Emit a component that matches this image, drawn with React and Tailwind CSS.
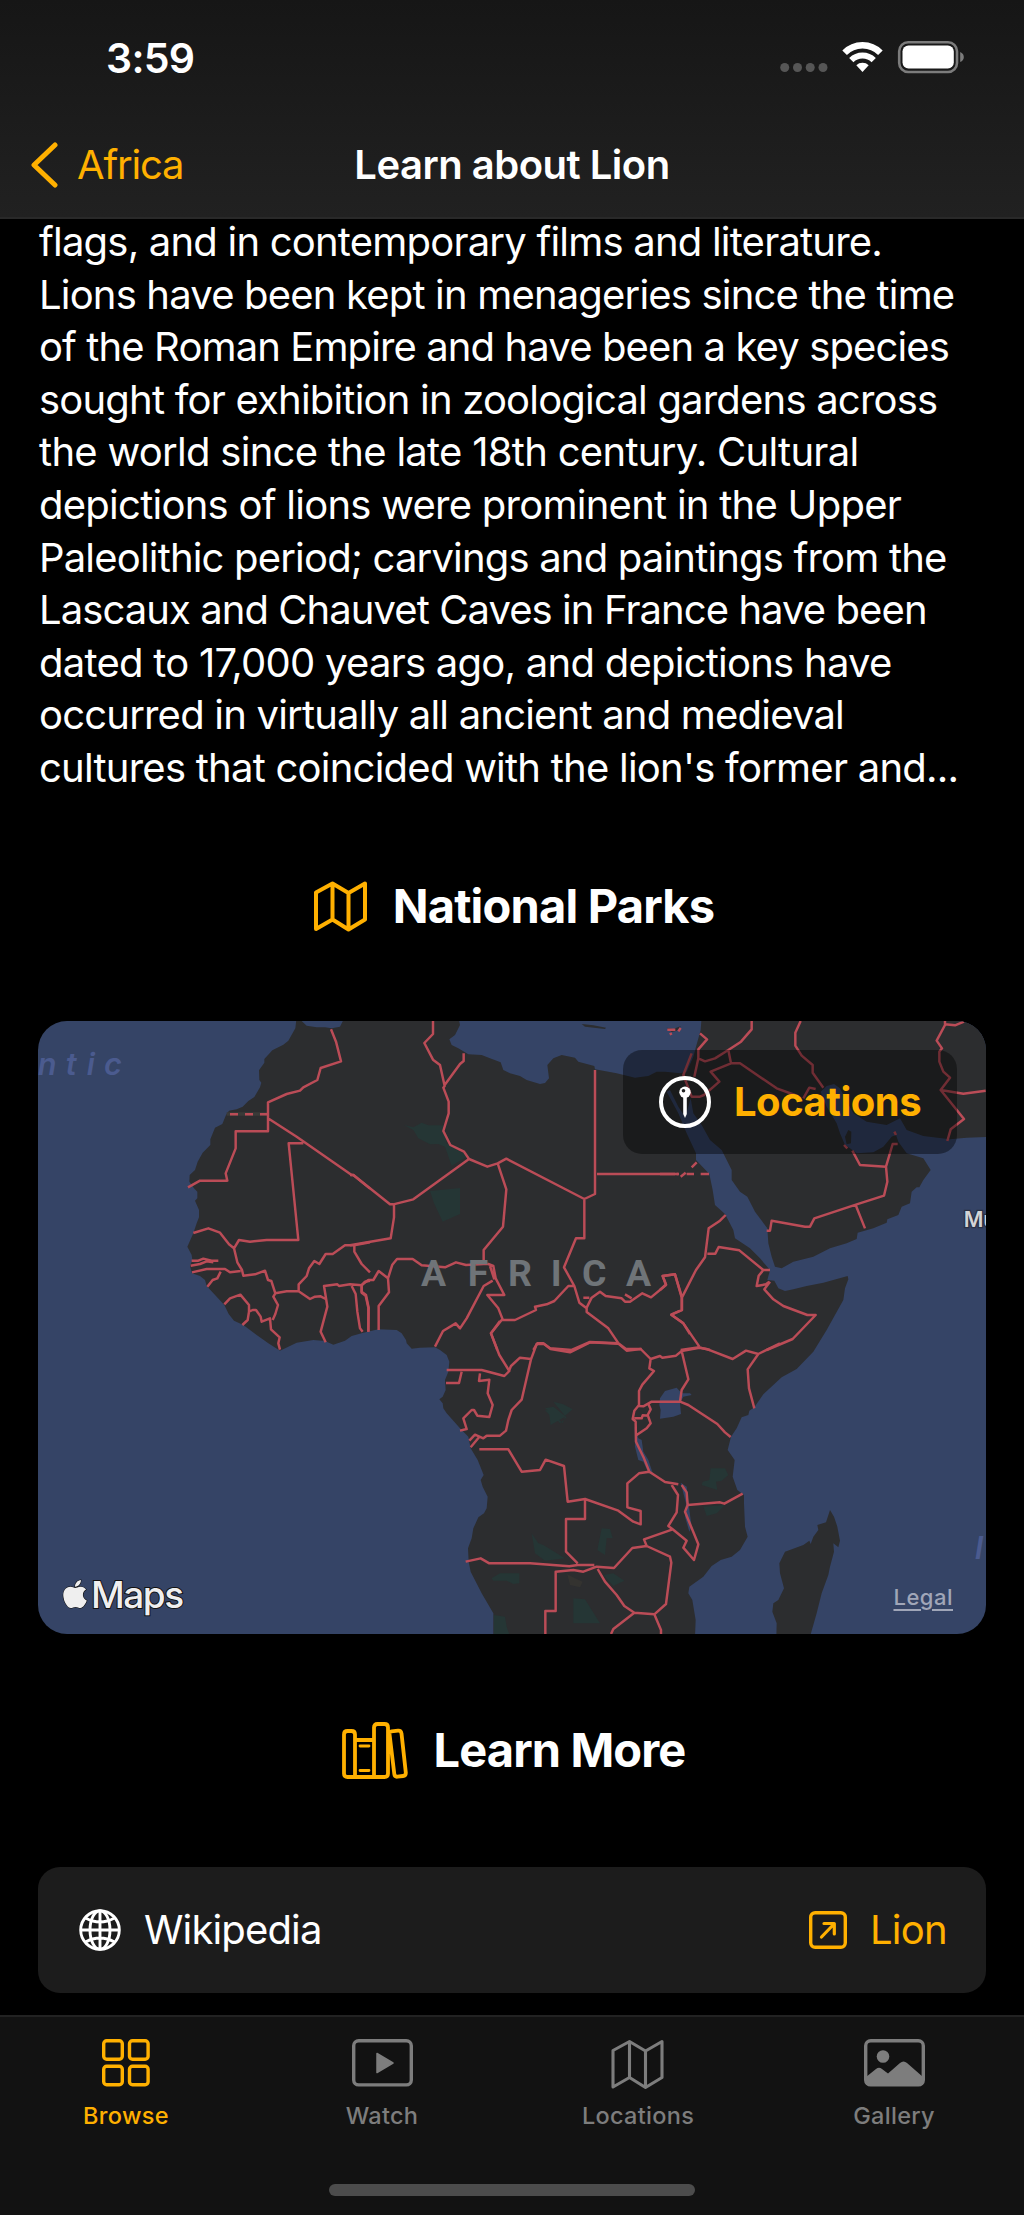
import React from "react";
import { FaApple } from "react-icons/fa";

const FONT = "font-['Inter','Liberation_Sans',sans-serif]";

const LINES = [
  ["flags, and in contemporary films and literature.", "tracking-[-0.79px]"],
  ["Lions have been kept in menageries since the time", "tracking-[-0.82px]"],
  ["of the Roman Empire and have been a key species", "tracking-[-0.89px]"],
  ["sought for exhibition in zoological gardens across", "tracking-[-0.8px]"],
  ["the world since the late 18th century. Cultural", "tracking-[-0.71px]"],
  ["depictions of lions were prominent in the Upper", "tracking-[-0.74px]"],
  ["Paleolithic period; carvings and paintings from the", "tracking-[-0.82px]"],
  ["Lascaux and Chauvet Caves in France have been", "tracking-[-0.93px]"],
  ["dated to 17,000 years ago, and depictions have", "tracking-[-0.75px]"],
  ["occurred in virtually all ancient and medieval", "tracking-[-0.8px]"],
  ["cultures that coincided with the lion's former and...", "tracking-[-0.76px]"],
];

const MAINLAND =
  "M800,20 796,55 775,92 760,104 727,121 703,147 703,158 687,181 688,210 694,218 690,232 673,261 655,273 638,290 620,298 597,302 588,315 577,342 555,353 541,388 541,405 518,428 503,455 495,480 479,495 478,515 492,535 502,545 502,565 495,572 507,600 507,622 500,640 490,670 472,710 485,735 487,750 480,768 486,790 510,798 525,810 530,828 560,860 583,885 596,912 612,932 640,945 680,975 715,1000 750,1022 800,998 850,990 885,993 910,1004 945,992 965,978 1000,968 1045,958 1100,960 1115,970 1128,990 1130,1000 1145,1016 1170,1013 1215,1012 1230,1020 1250,1035 1258,1055 1255,1085 1245,1110 1247,1140 1238,1160 1228,1168 1238,1180 1240,1195 1250,1210 1290,1255 1315,1280 1322,1315 1343,1350 1361,1395 1352,1410 1358,1430 1373,1460 1370,1495 1362,1510 1345,1522 1330,1555 1325,1585 1314,1615 1316,1655 1322,1685 1355,1750 1390,1810 1390,1880 1995,1880 1997,1830 1987,1770 1975,1750 1978,1730 2020,1700 2045,1668 2072,1650 2105,1640 2130,1620 2153,1580 2145,1550 2142,1480 2142,1455 2122,1440 2108,1400 2114,1350 2093,1320 2103,1280 2120,1255 2135,1222 2155,1215 2158,1202 2173,1192 2200,1153 2255,1102 2300,1077 2350,1025 2390,960 2440,870 2445,835 2455,808 2453,798 2380,818 2330,828 2290,838 2265,843 2245,835 2233,812 2212,810 2220,780 2190,745 2160,715 2115,685 2110,660 2085,612 2055,585 2048,540 2038,492 1998,450 1998,430 1970,370 1945,310 1910,245 1920,240 1945,290 1966,322 1982,265 1990,310 2015,345 2040,390 2075,420 2105,480 2105,510 2130,545 2152,560 2175,605 2212,655 2215,700 2225,740 2235,770 2255,775 2290,755 2350,740 2400,715 2450,700 2480,687 2483,668 2530,655 2570,638 2572,628 2605,615 2615,590 2640,580 2645,545 2660,532 2668,532 2680,510 2702,480 2680,445 2630,430 2605,395 2598,375 2585,380 2560,410 2530,427 2480,430 2460,415 2445,405 2430,370 2420,340 2390,290 2372,245 2390,228 2412,222 2430,235 2445,265 2470,310 2510,335 2570,345 2610,325 2630,360 2680,378 2760,388 2810,383 2880,381 2880,20 2015,20 2012,60 1998,110 1990,140 1970,185 1950,190 1905,185 1880,185 1855,198 1815,203 1760,190 1695,178 1693,168 1645,155 1635,143 1595,135 1570,145 1552,165 1557,205 1545,219 1530,222 1490,210 1470,198 1440,190 1420,180 1412,157 1380,145 1355,135 1315,133 1285,115 1265,105 1258,88 1275,75 1290,45 1285,20 945,20 930,50 905,55 885,52 860,52 830,47 815,33Z";

const MADAGASCAR =
  "M2400,1500 2412,1520 2422,1550 2430,1592 2425,1612 2410,1600 2412,1625 2400,1670 2395,1695 2375,1750 2360,1810 2340,1880 2239,1880 2240,1840 2227,1805 2230,1780 2245,1770 2262,1735 2250,1690 2248,1660 2265,1625 2320,1605 2338,1592 2342,1602 2350,1580 2365,1560 2362,1545 2388,1537Z";

// Country borders, one entry per map quadrant with its own origin.
const BORDERS = [
  {
    at: "translate(0 0)",
    d: "M903,58 918,95 933,154 872,174 862,210 820,232 810,242 770,252 714,277V364H617V415L587,490 592,512H510L474,532M714,325 800,380 965,495H970L1020,536M820,400H776L805,690H710L660,695 627,690 612,715 597,703 570,668 535,655 490,669M612,715 622,757 636,780 640,797 675,793 705,782 714,810 724,813 736,850 730,860 744,885 736,912 728,930M486,787 530,777H585L600,787 632,783M485,752 505,752 520,746 545,752 565,752M482,767 510,762 530,754 550,757M532,830 548,810 562,805 572,785M583,883 600,865 631,854 657,885V905L668,900 678,900 692,920 695,935 720,925 723,958 749,982 745,1000 750,1019M657,905 653,930 637,945M736,850 770,844H806L840,867 855,860 872,859 887,867M806,844V823L830,798 837,775 853,753 868,762 887,732H908L945,706H972L1020,697M973,706V725L995,762 1020,787M887,997 872,965 892,890 887,858 882,828 922,823 927,828 960,823 995,826 1005,815 1020,812M965,828 977,852 982,905 990,955 998,965M995,826V848L1007,857 1015,893V965",
  },
  {
    at: "translate(960 0)",
    d: "M249,33V72L223,99 249,149 270,165 284,228 280,233 296,275V310L280,363 301,405 342,425 357,447 412,470 443,460 469,446 703,567 735,552V180M341,130V153L330,162 284,225M357,447 190,568 130,583H120L10,495H0M132,585V622L122,685 0,706M443,460 469,538 459,650 401,720V762H415L430,768 437,805 463,855H412L445,895 458,928M401,762 348,765 318,757 285,772 215,766 188,747H141L127,764 114,805 117,847 86,888V960M114,805 86,783 70,810H55L35,825V845L48,855 56,893 55,965M428,812 401,828 350,925 330,955 317,940 279,963 255,1010M741,492H985M703,567V685H678L642,772 673,828 688,878 710,895V906L775,955 804,998M673,828H655L613,873 590,883 555,890 558,900 495,930H455L423,970 442,1020M710,893 725,863 750,845 767,858 815,865 825,875H840L877,850 903,862 948,825 938,798 975,793 995,862V900L964,914 1000,940 1020,972M700,863H718M420,768 433,808M550,1020 562,1000H580L600,1015 665,1020 720,996 805,1000 828,1017H875M825,853 845,865",
  },
  {
    at: "translate(1890 0)",
    d: "M0,492H45M50,492H57M62,500 77,488M95,472 110,457M80,492H102M122,492H147M275,33V58L243,95 205,120 165,145 135,154 115,145V118L141,88 120,70M205,120 213,160 152,185 178,215 132,255 120,260H95L70,195 95,130M115,145 103,200M213,160H240L350,235 405,255M422,33 406,68V107L425,137 458,165V188L490,233M430,265 448,233 467,237M320,662H330L335,632 435,650H450L463,625 590,583 672,557 682,515 678,470 600,465 577,422M678,470 698,402H713M587,585 615,655M855,33 855,45 830,92 846,115 838,125V155L850,185 870,203 842,240 912,327 872,358 862,393M855,43 885,46 912,35M842,240 910,251 977,242M703,365 708,375M552,405 562,415M197,615 180,632 146,655 135,742 108,780 66,862M142,731H166L176,711 238,721 310,780H330M310,780 296,797 290,828 318,823 328,815M330,815 313,838 340,868 370,888 442,915H467L398,987 320,1020M66,862 45,793 8,798 18,823 0,840M66,862V900L34,914 70,940 118,1010M62,1020 118,1012 150,1020",
  },
  {
    at: "translate(1200 870)",
    d: "M50,210H155L223,228 238,213 208,165 183,100 210,63M95,215 87,249H48M150,220 147,243 178,239 173,280 188,315 178,351 142,347 132,330H125L100,355 110,387 90,392M118,422 135,404 160,415 170,407H210L228,392 235,360 245,330 275,299 303,178 320,132H342L362,147 420,157 480,127 565,131 590,152 632,147 662,177 690,168 697,173 738,167 755,153 808,143M238,210 243,198 270,173 303,177M122,442 147,412M148,448H235L275,515 330,510 347,479 402,498 413,605 465,597V657H408V755L443,790M465,597 565,632 610,665 632,673V633L592,622V550L627,520 658,515 705,546 745,553M662,177 658,205 672,213 637,254 627,273V315L613,332 608,357 617,365 618,425 642,475 658,515M627,318 640,319 665,305H750L755,270 775,238 755,153M750,305 775,315 862,372 885,397 902,411M655,312 662,328 653,345 662,370 650,385 620,405M613,355H635L638,346 655,347M808,143 833,148 908,177 948,152 985,162 1050,130M985,162 953,208 957,265 973,325M755,555 770,577 773,615 765,635 805,733 792,780 760,743 770,722 728,688 642,718 650,738 720,770 724,788 708,912 673,943 613,938 550,987 543,1002M773,615 870,607 883,611 938,581M725,555 744,585 740,637 715,678 728,688M107,785 152,775 178,790H300L418,799 443,795H493M650,738 607,744 552,804 500,800 460,815 430,810 377,815V933H346V1002M503,807 525,845 560,885 583,918 613,938M673,943 693,990V1002",
  },
];

const PARKS =
  "M1122,345 1150,352 1175,338 1195,346H1240L1250,400 1290,425 1318,435 1265,468 1245,410 1225,402 1200,403 1165,385 1150,360ZM1200,543 1290,534V612L1238,635 1212,580ZM1545,1195 1570,1190 1610,1222 1590,1240 1565,1210 1552,1200ZM1545,1200 1560,1202 1598,1240 1605,1220 1562,1245 1558,1215ZM1570,1175 1600,1183 1628,1198 1605,1217ZM1715,1555 1740,1557 1748,1584H1730L1725,1635 1702,1620ZM1505,1570 1525,1600 1540,1605 1605,1645 1545,1652 1515,1630ZM1385,1705 1410,1690H1468V1720L1450,1722 1430,1712 1390,1712ZM1720,1695 1750,1690 1783,1712 1750,1728ZM1630,1765 1665,1768 1710,1840H1630ZM1392,1815 1425,1820 1430,1850 1440,1880H1392ZM2042,1375H2085L2095,1395 2075,1412 2058,1415 2062,1440 2015,1425 2018,1415 2038,1410ZM2020,1490 2085,1485 2060,1510 2030,1518Z";

const LAKES =
  "M1890,1165 1905,1143 1940,1133 1955,1150H1980L1985,1155 1960,1160 1950,1180 1953,1212 1930,1220 1890,1226 1892,1200 1888,1185ZM1814,1250 1825,1285 1835,1290 1840,1325 1855,1350 1870,1395 1855,1388 1840,1355 1825,1350 1815,1310ZM1952,1418 1970,1430 1978,1500 1985,1550 1978,1565 1965,1520 1968,1480Z";

function AfricaMap() {
  return (
    <svg viewBox="24 33 2844 1839" preserveAspectRatio="none" className="block h-full w-full">
      <rect x="0" y="0" width="2900" height="1900" fill="#354466" />
      <g fill="#2c2d2f">
        <path d={MAINLAND} />
        <path d={MADAGASCAR} />
        <path d="M2445,380 2455,360 2464,365 2463,400 2450,403Z" />
        <path d="M1655,42 1690,46 1728,53 1725,57 1665,50Z" />
        <path d="M1910,53 1930,57 1953,48 1940,62 1925,66Z" />
      </g>
      <path d={PARKS} fill="#253635" />
      <path d="M1612,1693 1635,1705 1658,1715 1650,1732 1620,1725Z" fill="#343330" />
      <path d={LAKES} fill="#354466" />
      <path d="M590,312H714" stroke="#3a3a38" strokeWidth="11" />
      <g fill="none" stroke="#bb4c57" strokeWidth="7.4" strokeLinejoin="round">
        {BORDERS.map((b) => (
          <path key={b.at} transform={b.at} d={b.d} />
        ))}
        <path d="M600,313H624M645,313H669M690,313H714" />
        <path d="M1912,59H1936M1945,64 1952,54M1921,68 1924,75" />
      </g>
      <g fontFamily="Inter, sans-serif">
        <g fontSize="92" fontStyle="italic" fontWeight="600" fill="#4b5b8f">
          <text y="194" x="23 107 170 222">ntic</text>
          <text y="1648" x="2834">I</text>
        </g>
        <text y="828" x="1211 1344 1470 1579 1693 1826" textAnchor="middle" fontSize="112" fontWeight="700" fill="#6f7478" className="font-['Roboto']">
          AFRICA
        </text>
        <text x="2801" y="650" fontSize="64" fontWeight="600" fill="#d3d4d6" stroke="#2a3145" strokeWidth="8" paintOrder="stroke">
          Mu
        </text>
      </g>
    </svg>
  );
}

function MapIcon({ className, w = 3.6 }) {
  return (
    <svg viewBox="0 0 53 51" className={className} fill="none" stroke="currentColor" strokeWidth={w} strokeLinejoin="round">
      <path d="M2,11.5V48L18.5,38.5 34.5,48.5 51,38.5V2.5L34.5,12 18.5,2.5ZM18.5,2.5V38.5M34.5,12V48.5" />
    </svg>
  );
}

function BooksIcon() {
  return (
    <svg viewBox="0 0 66 58" className="h-[58px] w-[66px]" fill="none" stroke="#ffb000" strokeWidth="3.8" strokeLinejoin="round" strokeLinecap="round">
      <path d="M2,12.5Q2,9 5.5,9H9.5Q13,9 13,12.5V55H5.5Q2,55 2,51.5ZM13,18H32M13,55H32M32,55V5.5Q32,2 35.5,2H42.5Q46,2 46,5.5V51.5Q46,55 42.5,55H32M49.5,9.3 56,8.7Q59,8.5 59.5,11.5L63.800,50.5Q64,53.700 61,54L55.5,54.700Q52.700,55 52.300,52L47.5,12Q47.300,9.5 49.5,9.3Z" />
      <path d="M18,24H27M18,48.5H27" strokeWidth="2.8" />
    </svg>
  );
}

function GlobeIcon() {
  return (
    <svg viewBox="0 0 42 42" className="h-[42px] w-[42px]" fill="none" stroke="#fff" strokeWidth="2.9">
      <circle cx="21" cy="21" r="19.3" />
      <ellipse cx="21" cy="21" rx="10" ry="19.3" />
      <path d="M21,1.5V40.5M1.5,21H40.5M6.5,9Q21,17 35.5,9M6.5,33Q21,25 35.5,33" />
    </svg>
  );
}

function ArrowSquare() {
  return (
    <svg viewBox="0 0 38 38" className="h-[38px] w-[38px]" fill="none" stroke="#ffb000" strokeWidth="3.400" strokeLinecap="round" strokeLinejoin="round">
      <rect x="1.700" y="1.700" width="34.600" height="34.600" rx="4.5" />
      <path d="M12.5,26 25,13M15,12.5H25.300V23" strokeWidth="3.2" />
    </svg>
  );
}

function StatusIcons() {
  return (
    <svg viewBox="770 30 210 60" className="h-[60px] w-[210px]">
      <g fill="#565656">
        <circle cx="784.700" cy="68.500" r="4.500" />
        <circle cx="797.500" cy="68.500" r="4.500" />
        <circle cx="810.200" cy="68.500" r="4.500" />
        <circle cx="823" cy="68.500" r="4.500" />
      </g>
      <g fill="none" stroke="#fff">
        <path d="M844.600,53.800A25,25 0 0 1 880.400,53.800" strokeWidth="6.400" />
        <path d="M851.300,61.200A15.800,15.800 0 0 1 873.700,61.200" strokeWidth="6" />
      </g>
      <path d="M862.500,73 856.300,66.200A9,9 0 0 1 868.700,66.200Z" fill="#fff" />
      <rect x="899.200" y="43.200" width="57.800" height="29.800" rx="9" fill="none" stroke="#7c7c7c" strokeWidth="2.600" />
      <rect x="902.500" y="46.500" width="51.300" height="23" rx="6" fill="#fff" />
      <path d="M960.200,53Q963.800,54.500 963.800,58T960.200,63Z" fill="#7c7c7c" />
    </svg>
  );
}

function PinIcon() {
  return (
    <svg viewBox="0 0 52 52" className="h-[52px] w-[52px]">
      <circle cx="26" cy="26" r="24" fill="none" stroke="#fff" strokeWidth="4" />
      <circle cx="26" cy="16.300" r="5.700" fill="#fff" />
      <circle cx="24.500" cy="14.800" r="1.800" fill="#222" />
      <path d="M24.200,20H27.800V38L26,42 24.200,38Z" fill="#fff" />
    </svg>
  );
}

const TABS = [
  {
    label: "Browse",
    spacing: "tracking-[0.35px]",
    color: "text-[#ffb000]",
    icon: (
      <svg viewBox="0 0 48 48" className="h-[48px] w-[48px]" fill="none" stroke="currentColor" strokeWidth="3.400">
        <rect x="1.700" y="1.700" width="18.600" height="18.600" rx="3" />
        <rect x="27.500" y="1.700" width="18.600" height="18.600" rx="3" />
        <rect x="1.700" y="27.200" width="18.600" height="18.600" rx="3" />
        <rect x="27.500" y="27.200" width="18.600" height="18.600" rx="3" />
      </svg>
    ),
  },
  {
    label: "Watch",
    spacing: "tracking-[0.3px]",
    color: "text-[#7d7d7d]",
    icon: (
      <svg viewBox="0 0 61 48" className="h-[48px] w-[61px]" fill="none" stroke="currentColor" strokeWidth="3.400">
        <rect x="1.700" y="1.700" width="57.600" height="44.200" rx="5" />
        <path d="M25,14.500 41,24 25,33.500Z" fill="currentColor" strokeWidth="1.500" strokeLinejoin="round" />
      </svg>
    ),
  },
  {
    label: "Locations",
    spacing: "tracking-[0.3px]",
    color: "text-[#7d7d7d]",
    icon: <MapIcon className="mr-[2px] h-[51px] w-[53px]" w={3.1} />,
  },
  {
    label: "Gallery",
    spacing: "tracking-[0.3px]",
    color: "text-[#7d7d7d]",
    icon: (
      <svg viewBox="0 0 61 48" className="h-[48px] w-[61px]" fill="none" stroke="currentColor" strokeWidth="3.400">
        <rect x="1.700" y="1.700" width="57.600" height="44.200" rx="5" />
        <circle cx="19" cy="17.500" r="6.300" fill="currentColor" stroke="none" />
        <path d="M2,38 12,30Q15,27.500 18,30L24,34.500 36,24Q39.500,21 43,24L59,38V42Q59,46 55,46H6Q2,46 2,42Z" fill="currentColor" stroke="none" />
      </svg>
    ),
  },
];

export default function App() {
  return (
    <div className={`flex h-[2215px] w-[1024px] flex-col overflow-hidden bg-black text-white ${FONT}`}>
      <header className="z-10 flex h-[219px] shrink-0 flex-col border-b-2 border-[#292929] bg-linear-to-b from-[#161616] to-[#212121]">
        <div className="flex h-[90px] items-end justify-between pr-[44px] pl-[106px]">
          <div className="flex h-[62px] items-center text-[41px] font-semibold tracking-[-0.7px]">3:59</div>
          <StatusIcons />
        </div>
        <div className="grid h-[128px] grid-cols-[1fr_auto_1fr] items-start pt-[46px] pl-[30px]">
          <div className="flex items-center text-[#ffb000]">
            <svg viewBox="0 0 29 46" className="mr-[18px] h-[46px] w-[29px]" fill="none" stroke="currentColor" strokeWidth="5" strokeLinecap="round" strokeLinejoin="round">
              <path d="M25,3 4,23 25,43" />
            </svg>
            <span className="text-[40px] leading-[60px] tracking-[-1.2px]">Africa</span>
          </div>
          <h1 className="-ml-[30px] text-[40px] leading-[60px] font-semibold tracking-[-0.5px]">Learn about Lion</h1>
        </div>
      </header>

      <main className="flex h-[1796px] shrink-0 flex-col overflow-hidden px-[38px]">
        <div className="-mt-[3px] ml-px text-[40px] leading-[52.6px]">
          {LINES.map(([line, spacing]) => (
            <p key={line} className={`whitespace-nowrap ${spacing}`}>
              {line}
            </p>
          ))}
        </div>

        <div className="mt-[59px] flex h-[105px] items-center justify-center gap-[26px] pl-[4px]">
          <MapIcon className="h-[51px] w-[53px] text-[#ffb000]" w={4} />
          <h2 className="text-[47px] font-bold tracking-[-0.8px]">National Parks</h2>
        </div>

        <section className="relative mt-[62px] h-[613px] w-[948px] shrink-0 overflow-hidden rounded-[29px]">
          <AfricaMap />
          <div className="absolute top-[29px] right-[29px] flex h-[104px] w-[334px] items-center rounded-[19px] bg-black/40 pl-[36px]">
            <PinIcon />
            <span className="ml-[23px] text-[40px] font-bold tracking-[-0.5px] text-[#ffb000]">Locations</span>
          </div>
          <div className="absolute bottom-[19px] left-[24px] flex items-center text-[#efefef]">
            <FaApple className="-mt-[2px] h-[32px] w-[26px] overflow-visible" stroke="#111" strokeWidth="18" style={{ paintOrder: "stroke" }} />
            <span className="ml-[3px] text-[37px] leading-[40px] font-medium tracking-[-1.5px] [-webkit-text-stroke:2px_#111] [paint-order:stroke_fill]">Maps</span>
          </div>
          <span className="absolute right-[33px] bottom-[23px] text-[22px] leading-[28px] font-medium tracking-[0.5px] text-[#a0a6b8] underline decoration-2 underline-offset-4">Legal</span>
        </section>

        <div className="mt-[64px] flex h-[106px] items-center justify-center gap-[26px] pl-[3px]">
          <BooksIcon />
          <h2 className="text-[47px] font-bold tracking-[-0.9px]">Learn More</h2>
        </div>

        <section className="mt-[63px] flex h-[126px] w-[948px] shrink-0 items-center justify-between rounded-[22px] bg-[#1c1c1c] pr-[39px] pl-[41px] text-[40px]">
          <div className="flex items-center gap-[23px]">
            <GlobeIcon />
            <span className="tracking-[-0.85px]">Wikipedia</span>
          </div>
          <div className="flex items-center gap-[23px] text-[#ffb000]">
            <ArrowSquare />
            <span className="tracking-[-0.7px]">Lion</span>
          </div>
        </section>
      </main>

      <nav className="flex h-[200px] shrink-0 flex-col border-t-2 border-[#222] bg-[#121212]">
        <div className="-ml-[2px] grid w-[1024px] grid-cols-4 pt-[22px]">
          {TABS.map((t) => (
            <div key={t.label} className={`flex flex-col items-center ${t.color}`}>
              <div className="flex h-[59px] items-start">{t.icon}</div>
              <span className={`text-[23.5px] leading-[36px] font-medium ${t.spacing}`}>{t.label}</span>
            </div>
          ))}
        </div>
        <div className="mx-auto mt-[50px] h-[12px] w-[366px] rounded-full bg-[#4c4c4c]" />
      </nav>
    </div>
  );
}
